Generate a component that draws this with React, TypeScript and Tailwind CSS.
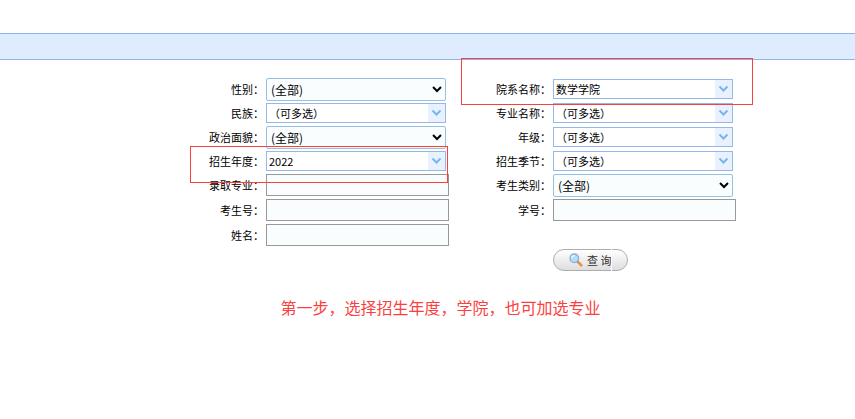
import React from 'react';

type FieldKind = 'select' | 'combo' | 'text';

interface Field {
  id: string;
  label: string;
  kind: FieldKind;
  value?: string;
  highlight?: string;
}

const ROWS: [Field, Field | null][] = [
  [
    { id: 'gender', label: '性别', kind: 'select', value: '(全部)' },
    {
      id: 'college',
      label: '院系名称',
      kind: 'combo',
      value: '数学学院',
      highlight: '-left-[92px] -top-[19px] h-[47px] w-[292px]',
    },
  ],
  [
    { id: 'nation', label: '民族', kind: 'combo', value: '（可多选）' },
    { id: 'major', label: '专业名称', kind: 'combo', value: '（可多选）' },
  ],
  [
    { id: 'politics', label: '政治面貌', kind: 'select', value: '(全部)' },
    { id: 'grade', label: '年级', kind: 'combo', value: '（可多选）' },
  ],
  [
    {
      id: 'year',
      label: '招生年度',
      kind: 'combo',
      value: '2022',
      highlight: '-left-[76px] -top-[3px] h-[37px] w-[258px]',
    },
    { id: 'season', label: '招生季节', kind: 'combo', value: '（可多选）' },
  ],
  [
    { id: 'admitMajor', label: '录取专业', kind: 'text' },
    { id: 'examType', label: '考生类别', kind: 'select', value: '(全部)' },
  ],
  [
    { id: 'examNo', label: '考生号', kind: 'text' },
    { id: 'studentNo', label: '学号', kind: 'text' },
  ],
  [{ id: 'name', label: '姓名', kind: 'text' }, null],
];

const ComboField: React.FC<{ field: Field }> = ({ field }) => (
  <div className="mt-0.5 flex h-5 w-[180px] border border-[#95b8e7] bg-white">
    <input
      id={field.id}
      type="text"
      defaultValue={field.value}
      className="min-w-0 flex-1 px-0.5 text-[11px] leading-4 outline-none"
    />
    <button
      type="button"
      aria-label={`展开${field.label}`}
      className="flex w-[17px] items-center justify-center bg-[#e9f1ff]"
    >
      <svg width="11" height="8" viewBox="0 0 11 8" fill="none" stroke="#73b8ee" strokeWidth="2">
        <path d="M1.5 1.5 L5.5 5.5 L9.5 1.5" />
      </svg>
    </button>
  </div>
);

const FieldControl: React.FC<{ field: Field }> = ({ field }) => {
  if (field.kind === 'combo') return <ComboField field={field} />;

  if (field.kind === 'select') {
    return (
      <select
        id={field.id}
        className="mt-px block h-[23px] w-[180px] rounded-[2px] border border-[#95c0df] bg-[#f9fdfe] pb-px text-xs"
      >
        <option>{field.value}</option>
      </select>
    );
  }

  return (
    <input
      id={field.id}
      type="text"
      className="mt-px block h-[22px] w-full border border-[#999] bg-[#f9fdfe] px-1 text-[11px] outline-none"
    />
  );
};

const FieldCells: React.FC<{ field: Field }> = ({ field }) => (
  <>
    <label htmlFor={field.id} className="mt-1 self-start text-right leading-4">
      {field.label}：
    </label>
    <div className="relative">
      <FieldControl field={field} />
      {field.highlight && (
        <div className={`pointer-events-none absolute z-10 border border-[#fb3f3f] ${field.highlight}`} />
      )}
    </div>
  </>
);

const SearchIcon = () => (
  <svg width="14" height="14" viewBox="0 0 14 14" fill="none">
    <path d="M8.5 8.5 L12.3 12.3" stroke="#dd9348" strokeWidth="2.6" strokeLinecap="round" />
    <circle cx="5.3" cy="5.3" r="4.3" fill="#b4dcfa" stroke="#8eabd0" strokeWidth="1.3" />
    <path d="M2.8 5 A2.7 2.7 0 0 1 5.4 2.6" stroke="#effaff" strokeWidth="1.4" />
  </svg>
);

export default function App() {
  return (
    <main className="bg-white pt-[33px] font-['Noto_Sans_CJK_SC',sans-serif] text-[11px] text-black">
      <div className="h-[27px] border-y border-[#8db5eb] bg-[#dfebff]" />

      <form
        onSubmit={(e) => e.preventDefault()}
        className="grid grid-cols-[145px_183px_100px_183px] grid-rows-[repeat(4,24px)_repeat(4,25px)] justify-center gap-x-0.5 pt-[17px]"
      >
        {ROWS.map(([left, right]) => (
          <React.Fragment key={left.id}>
            <FieldCells field={left} />
            {right ? <FieldCells field={right} /> : <div className="col-span-2" />}
          </React.Fragment>
        ))}

        <div className="col-start-4">
          <button
            type="submit"
            className="relative mt-px flex h-[22px] w-[75px] items-center rounded-full border border-[#adadad] bg-linear-to-b from-white to-[#dedede] pl-[15px] text-[#333]"
          >
            <SearchIcon />
            <span className="ml-1 leading-4">查 询</span>
            {/* seam between the two halves of the button skin */}
            <span className="absolute -top-px right-[15px] h-[22px] w-px bg-white" />
          </button>
        </div>
      </form>

      <p className="mt-[22px] pl-[26px] text-center text-base leading-6 text-[#fb3f3f]">
        第一步，选择招生年度，学院，也可加选专业
      </p>
    </main>
  );
}
